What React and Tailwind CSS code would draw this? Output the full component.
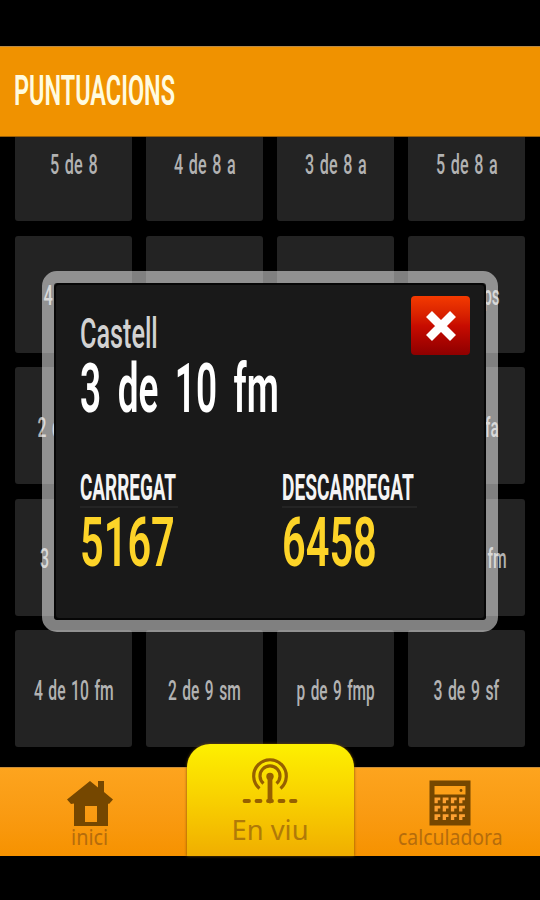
import { useLayoutEffect, useRef, useState } from 'react'
import clsx from 'clsx'

// Rows 2-4 sit behind the dialog, the middle columns are fully covered
const TILES = [
  { label: '5 de 8', width: 48 },
  { label: '4 de 8 a', width: 62 },
  { label: '3 de 8 a', width: 62 },
  { label: '5 de 8 a', width: 62 },
  { label: '4 de 9 f', width: 60 },
  null,
  null,
  { label: '4 de 8 ps', width: 67 },
  { label: '2 de 9 fm', width: 71 },
  null,
  null,
  { label: '4 de 9 fa', width: 64 },
  { label: '3 de 9 fa', width: 67 },
  null,
  null,
  { label: '3 de 10 fm', width: 80 },
  { label: '4 de 10 fm', width: 80 },
  { label: '2 de 9 sm', width: 73 },
  { label: 'p de 9 fmp', width: 78 },
  { label: '3 de 9 sf', width: 66 },
]

export default function App() {
  return (
    <div className="flex h-[900px] w-[540px] flex-col overflow-hidden bg-black pt-[46px] pb-[44px] font-['Roboto','Liberation_Sans',sans-serif]">
      <header className="flex h-[91px] shrink-0 items-center border-t border-b border-t-[#b98a45] border-b-[#9a5f08] bg-[#f09200] pl-[14px]">
        <Fit width={161} className="-mt-[4px] text-[43px] leading-[44px] font-semibold text-[#fffbe0]">
          PUNTUACIONS
        </Fit>
      </header>

      <main className="relative h-[630px] shrink-0 overflow-hidden">
        <div className="-mt-[33px] grid grid-cols-4 gap-x-[14px] gap-y-[14.5px] px-[15px] [word-spacing:0.18em]">
          {TILES.map((tile, i) => (
            <div key={i} className="flex h-[117px] items-center justify-center rounded-[3px] bg-[#232323] pt-[4px]">
              {tile && (
                <Fit width={tile.width} center className="text-[27px] leading-[28px] font-medium text-[#b2b2b2]">
                  {tile.label}
                </Fit>
              )}
            </div>
          ))}
        </div>
        <ScoreDialog />
      </main>

      <NavBar />
    </div>
  )
}

function ScoreDialog() {
  return (
    <div className="absolute top-[134px] left-[42px] h-[361px] w-[456px] rounded-[15px] border-[12px] border-white/50 bg-clip-padding">
      <div className="flex h-full flex-col rounded-[5px] border-2 border-[#060606] bg-[#191919] px-[24px] pt-[11px]">
        <div className="flex items-start justify-between">
          <div className="pt-[12px]">
            <Fit width={78} className="text-[43px] leading-[50px] font-medium text-[#d2d2d2]">
              Castell
            </Fit>
            <Fit width={199} className="mt-px text-[69px] leading-[60px] font-semibold text-white [word-spacing:0.2em]">
              3 de 10 fm
            </Fit>
          </div>
          <button className="-mr-[10px] flex size-[59px] items-center justify-center rounded-[4px] bg-linear-to-b from-[#f43a00] via-[#c80c00] to-[#8e0000]">
            <svg viewBox="0 0 30 30" className="size-[30px]" stroke="#fff" strokeWidth="8.4">
              <path d="M3 3 27 27M27 3 3 27" />
            </svg>
          </button>
        </div>

        <div className="mt-[50px] grid grid-cols-[202px_1fr]">
          <Score title="CARREGAT" titleWidth={96} value="5167" ruleClass="w-[98px]" />
          <Score title="DESCARREGAT" titleWidth={132} value="6458" ruleClass="w-[135px]" />
        </div>
      </div>
    </div>
  )
}

function Score({ title, titleWidth, value, ruleClass }) {
  return (
    <div>
      <Fit width={titleWidth} className="text-[37px] leading-[38px] font-bold text-[#f4f4f4]">
        {title}
      </Fit>
      <div className={clsx('-mt-px h-[2px] bg-[#242424]', ruleClass)} />
      <Fit width={95} className="mt-px text-[69px] leading-[68px] font-semibold text-[#fdd428]">
        {value}
      </Fit>
    </div>
  )
}

function NavBar() {
  return (
    <nav className="flex h-[89px] shrink-0 items-end font-['Noto_Sans','Open_Sans',sans-serif]">
      <div className="flex h-[89px] w-[187px] flex-col items-center border-t border-[#c98d3a] bg-linear-to-b from-[#fda41e] to-[#f69200] pt-[12px] pr-[7px]">
        <HouseIcon />
        <Fit width={37} center className="-mt-px text-[22px] leading-[22px] text-[#b56c0c]">
          inici
        </Fit>
      </div>
      <div className="relative flex h-[112px] w-[167px] flex-col items-center rounded-t-[23px] bg-linear-to-b from-[#fdf000] via-[#f8d000] to-[#f0ae00] pt-[14px] pr-[2px] shadow-[0_0_3px_#7a5000]">
        <AntennaIcon />
        <Fit width={77} center className="mt-[11px] ml-[2px] text-[27px] leading-[30px] text-[#b07a08]">
          En viu
        </Fit>
      </div>
      <div className="flex h-[89px] flex-1 flex-col items-center border-t border-[#c98d3a] bg-linear-to-b from-[#fda41e] to-[#f69200] pt-[12px] pl-[6px]">
        <CalculatorIcon />
        <Fit width={105} center className="-mt-px text-[22px] leading-[22px] text-[#b56c0c]">
          calculadora
        </Fit>
      </div>
    </nav>
  )
}

// Squeezes a line of text horizontally to the given width
function Fit({ width, center, className, children }) {
  const ref = useRef(null)
  const [scale, setScale] = useState(1)

  useLayoutEffect(() => {
    setScale(width / ref.current.offsetWidth)
  }, [width])

  return (
    <div className={clsx('flex', center && 'justify-center', className)} style={{ width }}>
      <span
        ref={ref}
        className={clsx('shrink-0 whitespace-nowrap', center ? 'origin-center' : 'origin-left')}
        style={{ transform: `scaleX(${scale})` }}
      >
        {children}
      </span>
    </div>
  )
}

function HouseIcon() {
  return (
    <svg viewBox="0 0 46 46" className="h-[46px] w-[46px] shrink-0" fill="#754700">
      <path d="M23 1 31 7.500V1h6v11l9 7.500-4 4.500-1-.5V46H7V23.500L4 24 0 19.500ZM18 26v16h12V26Z" fillRule="evenodd" />
    </svg>
  )
}

function AntennaIcon() {
  return (
    <svg viewBox="0 0 56 46" className="h-[46px] w-[56px] shrink-0" fill="none" stroke="#966000" strokeLinecap="round">
      <path d="M17.500 30.500A16.300 16.300 0 1 1 38.500 30.500" strokeWidth="3.200" strokeLinecap="butt" />
      <path d="M21.500 25.500A10 10 0 1 1 34.500 25.500" strokeWidth="3.200" strokeLinecap="butt" />
      <circle cx="28" cy="18.500" r="3.700" fill="#966000" stroke="none" />
      <path d="M28 18.500V43" strokeWidth="4.800" />
      <path d="M2.500 43h4.500M14.500 43h4M26 43h4M37.500 43h4M49 43h4.500" strokeWidth="3.800" />
    </svg>
  )
}

function CalculatorIcon() {
  return (
    <svg viewBox="0 0 42 46" className="h-[46px] w-[42px] shrink-0">
      <path d="M.5.500h41v45H.5Z" fill="#754700" />
      <path d="M5.500 6h31v8.500h-31Z" fill="#fda018" />
      <circle cx="32" cy="10.500" r="1.400" fill="#754700" />
      {[17.5, 25.8, 34.2].map((y) =>
        [5.5, 13.7, 21.9, 30.1].map((x) => (
          <path key={`${x}-${y}`} d={`M${x} ${y}h5.800v2.800h-2.500v3h-3.300Z`} fill="#fda030" />
        )),
      )}
    </svg>
  )
}
